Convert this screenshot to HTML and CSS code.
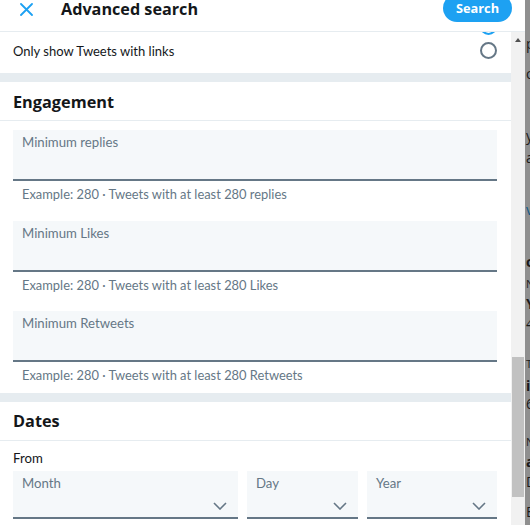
FILE: index.html
```html
<!DOCTYPE html>
<html lang="en">
<head>
<meta charset="utf-8">
<title>Advanced search</title>
<link rel="stylesheet" href="styles.css">
</head>
<body>
<div class="modal">
  <header class="topbar">
    <button class="close" aria-label="Close">
      <svg viewBox="0 0 13 13" width="13" height="13"><path d="M1 1 L12 12 M12 1 L1 12" stroke="#1da1f2" stroke-width="1.8" stroke-linecap="round" fill="none"/></svg>
    </button>
    <h1 class="title">Advanced search</h1>
    <button class="search">Search</button>
  </header>
  <div class="main">
    <div class="scroll">
      <div class="stub"><span class="radio radio-on"></span></div>
      <label class="optrow"><span>Only show Tweets with links</span><span class="radio"></span></label>
      <div class="band"></div>
      <h2 class="section">Engagement</h2>
      <div class="group">
        <div class="field"><span class="flabel">Minimum replies</span></div>
        <p class="help">Example: 280 · Tweets with at least 280 replies</p>
      </div>
      <div class="group">
        <div class="field"><span class="flabel">Minimum Likes</span></div>
        <p class="help">Example: 280 · Tweets with at least 280 Likes</p>
      </div>
      <div class="group">
        <div class="field"><span class="flabel">Minimum Retweets</span></div>
        <p class="help">Example: 280 · Tweets with at least 280 Retweets</p>
      </div>
      <div class="band"></div>
      <h2 class="section">Dates</h2>
      <div class="dates">
        <div class="from">From</div>
        <div class="selects">
          <div class="select"><span class="flabel">Month</span><svg class="chev" viewBox="0 0 14 8" width="14" height="8"><path d="M1 1 L7 7 L13 1" stroke="#657786" stroke-width="1.6" fill="none"/></svg></div>
          <div class="select"><span class="flabel">Day</span><svg class="chev" viewBox="0 0 14 8" width="14" height="8"><path d="M1 1 L7 7 L13 1" stroke="#657786" stroke-width="1.6" fill="none"/></svg></div>
          <div class="select"><span class="flabel">Year</span><svg class="chev" viewBox="0 0 14 8" width="14" height="8"><path d="M1 1 L7 7 L13 1" stroke="#657786" stroke-width="1.6" fill="none"/></svg></div>
        </div>
      </div>
    </div>
    <div class="scrollbar">
      <span class="arrow"></span>
      <div class="thumb"></div>
    </div>
  </div>
</div>
<div class="backdrop">
  <span class="bg-l b1">p</span>
  <span class="bg-l b2">o</span>
  <span class="bg-l b3">y</span>
  <span class="bg-l b4">a</span>
  <span class="bg-l b5 link">v</span>
  <span class="bg-l b6 bold">c</span>
  <span class="bg-l b7">N</span>
  <span class="bg-l b8 bold">Y</span>
  <span class="bg-l b9">4</span>
  <span class="bg-l b10">T</span>
  <span class="bg-l b11 bold">i</span>
  <span class="bg-l b12">6</span>
  <span class="bg-l b13">N</span>
  <span class="bg-l b14 bold">a</span>
  <span class="bg-l b15">D</span>
  <span class="bg-l b16">E</span>
</div>
</body>
</html>
```

FILE: styles.css
```css
* { box-sizing: border-box; margin: 0; padding: 0; }
html, body { height: 100%; overflow: hidden; }
body {
  display: flex;
  font-family: "Segoe UI", Lato, "Open Sans", sans-serif;
  color: #14171a;
  background: #8f8f8f;
}
.modal {
  flex: none;
  width: 525px;
  height: 525px;
  background: #fff;
  display: flex;
  flex-direction: column;
}
.topbar {
  flex: none;
  height: 32px;
  display: flex;
  align-items: flex-start;
  border-bottom: 1px solid #e6ecf0;
  padding: 0 13px 0 20px;
}
.close {
  width: 13px;
  height: 13px;
  margin-top: 3px;
  border: 0;
  background: none;
  display: flex;
}
.title {
  font-family: "Open Sans", sans-serif;
  font-size: 16.2px;
  font-weight: 700;
  line-height: 18px;
  margin-left: 28px;
}
.search {
  margin-left: auto;
  margin-top: -6px;
  width: 69px;
  height: 28px;
  border: 0;
  border-radius: 14px;
  background: #1da1f2;
  color: #fff;
  font-family: "Open Sans", sans-serif;
  font-size: 12.8px;
  line-height: 16px;
  font-weight: 700;
  padding: 0;
}
.main {
  flex: 1;
  min-height: 0;
  display: flex;
}
.scroll {
  flex: 1;
  overflow: hidden;
}
.stub {
  height: 3px;
  margin-bottom: -3px;
  overflow: hidden;
  display: flex;
  justify-content: flex-end;
  align-items: flex-end;
  padding-right: 14px;
}
.radio {
  flex: none;
  width: 17px;
  height: 17px;
  border: 2px solid #657786;
  border-radius: 50%;
}
.radio-on { border-color: #1da1f2; background: #1da1f2; box-shadow: inset 0 0 0 3px #fff; }
.optrow {
  height: 41px;
  display: flex;
  align-items: center;
  justify-content: space-between;
  padding: 0 14px 4px 13px;
  font-size: 13px;
  line-height: 18px;
}
.band {
  height: 9px;
  background: #e6ecf0;
}
.section {
  height: 39px;
  display: flex;
  align-items: center;
  padding: 1px 13px 0;
  border-bottom: 1px solid #e6ecf0;
  font-family: "Open Sans", sans-serif;
  font-size: 16.3px;
  font-weight: 700;
}
.group {
  padding: 9px 14px 0 13px;
}
.field {
  height: 51px;
  background: #f5f8fa;
  border-bottom: 2px solid #657786;
  padding: 3px 9px 0;
}
.flabel {
  display: block;
  font-size: 13.2px;
  line-height: 18px;
  color: #657786;
}
.help {
  height: 30.5px;
  padding: 5px 9px 0;
  font-size: 12.9px;
  line-height: 16px;
  color: #657786;
}
.dates {
  padding: 0 14px 0 13px;
}
.from {
  margin-top: 7px;
  font-size: 13.2px;
  line-height: 20px;
}
.selects {
  margin-top: 3px;
  display: grid;
  grid-template-columns: 225px 111px 1fr;
  gap: 9px;
}
.select {
  height: 48px;
  background: #f5f8fa;
  border-bottom: 2px solid #657786;
  padding: 3px 11px 0 9px;
  display: flex;
  flex-direction: column;
}
.chev {
  margin-top: auto;
  margin-bottom: 7px;
  align-self: flex-end;
}
.scrollbar {
  flex: none;
  width: 14px;
  background: #f1f1f1;
  display: flex;
  flex-direction: column;
  align-items: center;
}
.arrow {
  margin-top: 6px;
  width: 0;
  height: 0;
  border-left: 3.5px solid transparent;
  border-right: 3.5px solid transparent;
  border-bottom: 4px solid #505050;
}
.thumb {
  margin-top: 315px;
  width: 12px;
  height: 140px;
  background: #c1c1c1;
}
.backdrop {
  flex: 1;
  overflow: hidden;
  display: flex;
  flex-direction: column;
  font-family: "Open Sans", sans-serif;
  font-size: 14px;
  line-height: 16px;
  color: #1a1a1a;
}
.bg-l { display: block; margin-left: 1px; }
.link { color: #0f5a88; }
.bold { font-weight: 700; }
.b1 { margin-top: 36px; }
.b2 { margin-top: 14px; }
.b3 { margin-top: 46px; }
.b4 { margin-top: 6px; }
.b5 { margin-top: 36px; }
.b6 { margin-top: 36px; }
.b7 { margin-top: 6px; font-size: 11px; }
.b8 { margin-top: 4px; }
.b9 { margin-top: 4px; }
.b10 { margin-top: 24px; font-size: 11px; }
.b11 { margin-top: 6px; }
.b12 { margin-top: 2px; }
.b13 { margin-top: 22px; font-size: 11px; }
.b14 { margin-top: 4px; }
.b15 { margin-top: 4px; }
.b16 { margin-top: 14px; }
```
